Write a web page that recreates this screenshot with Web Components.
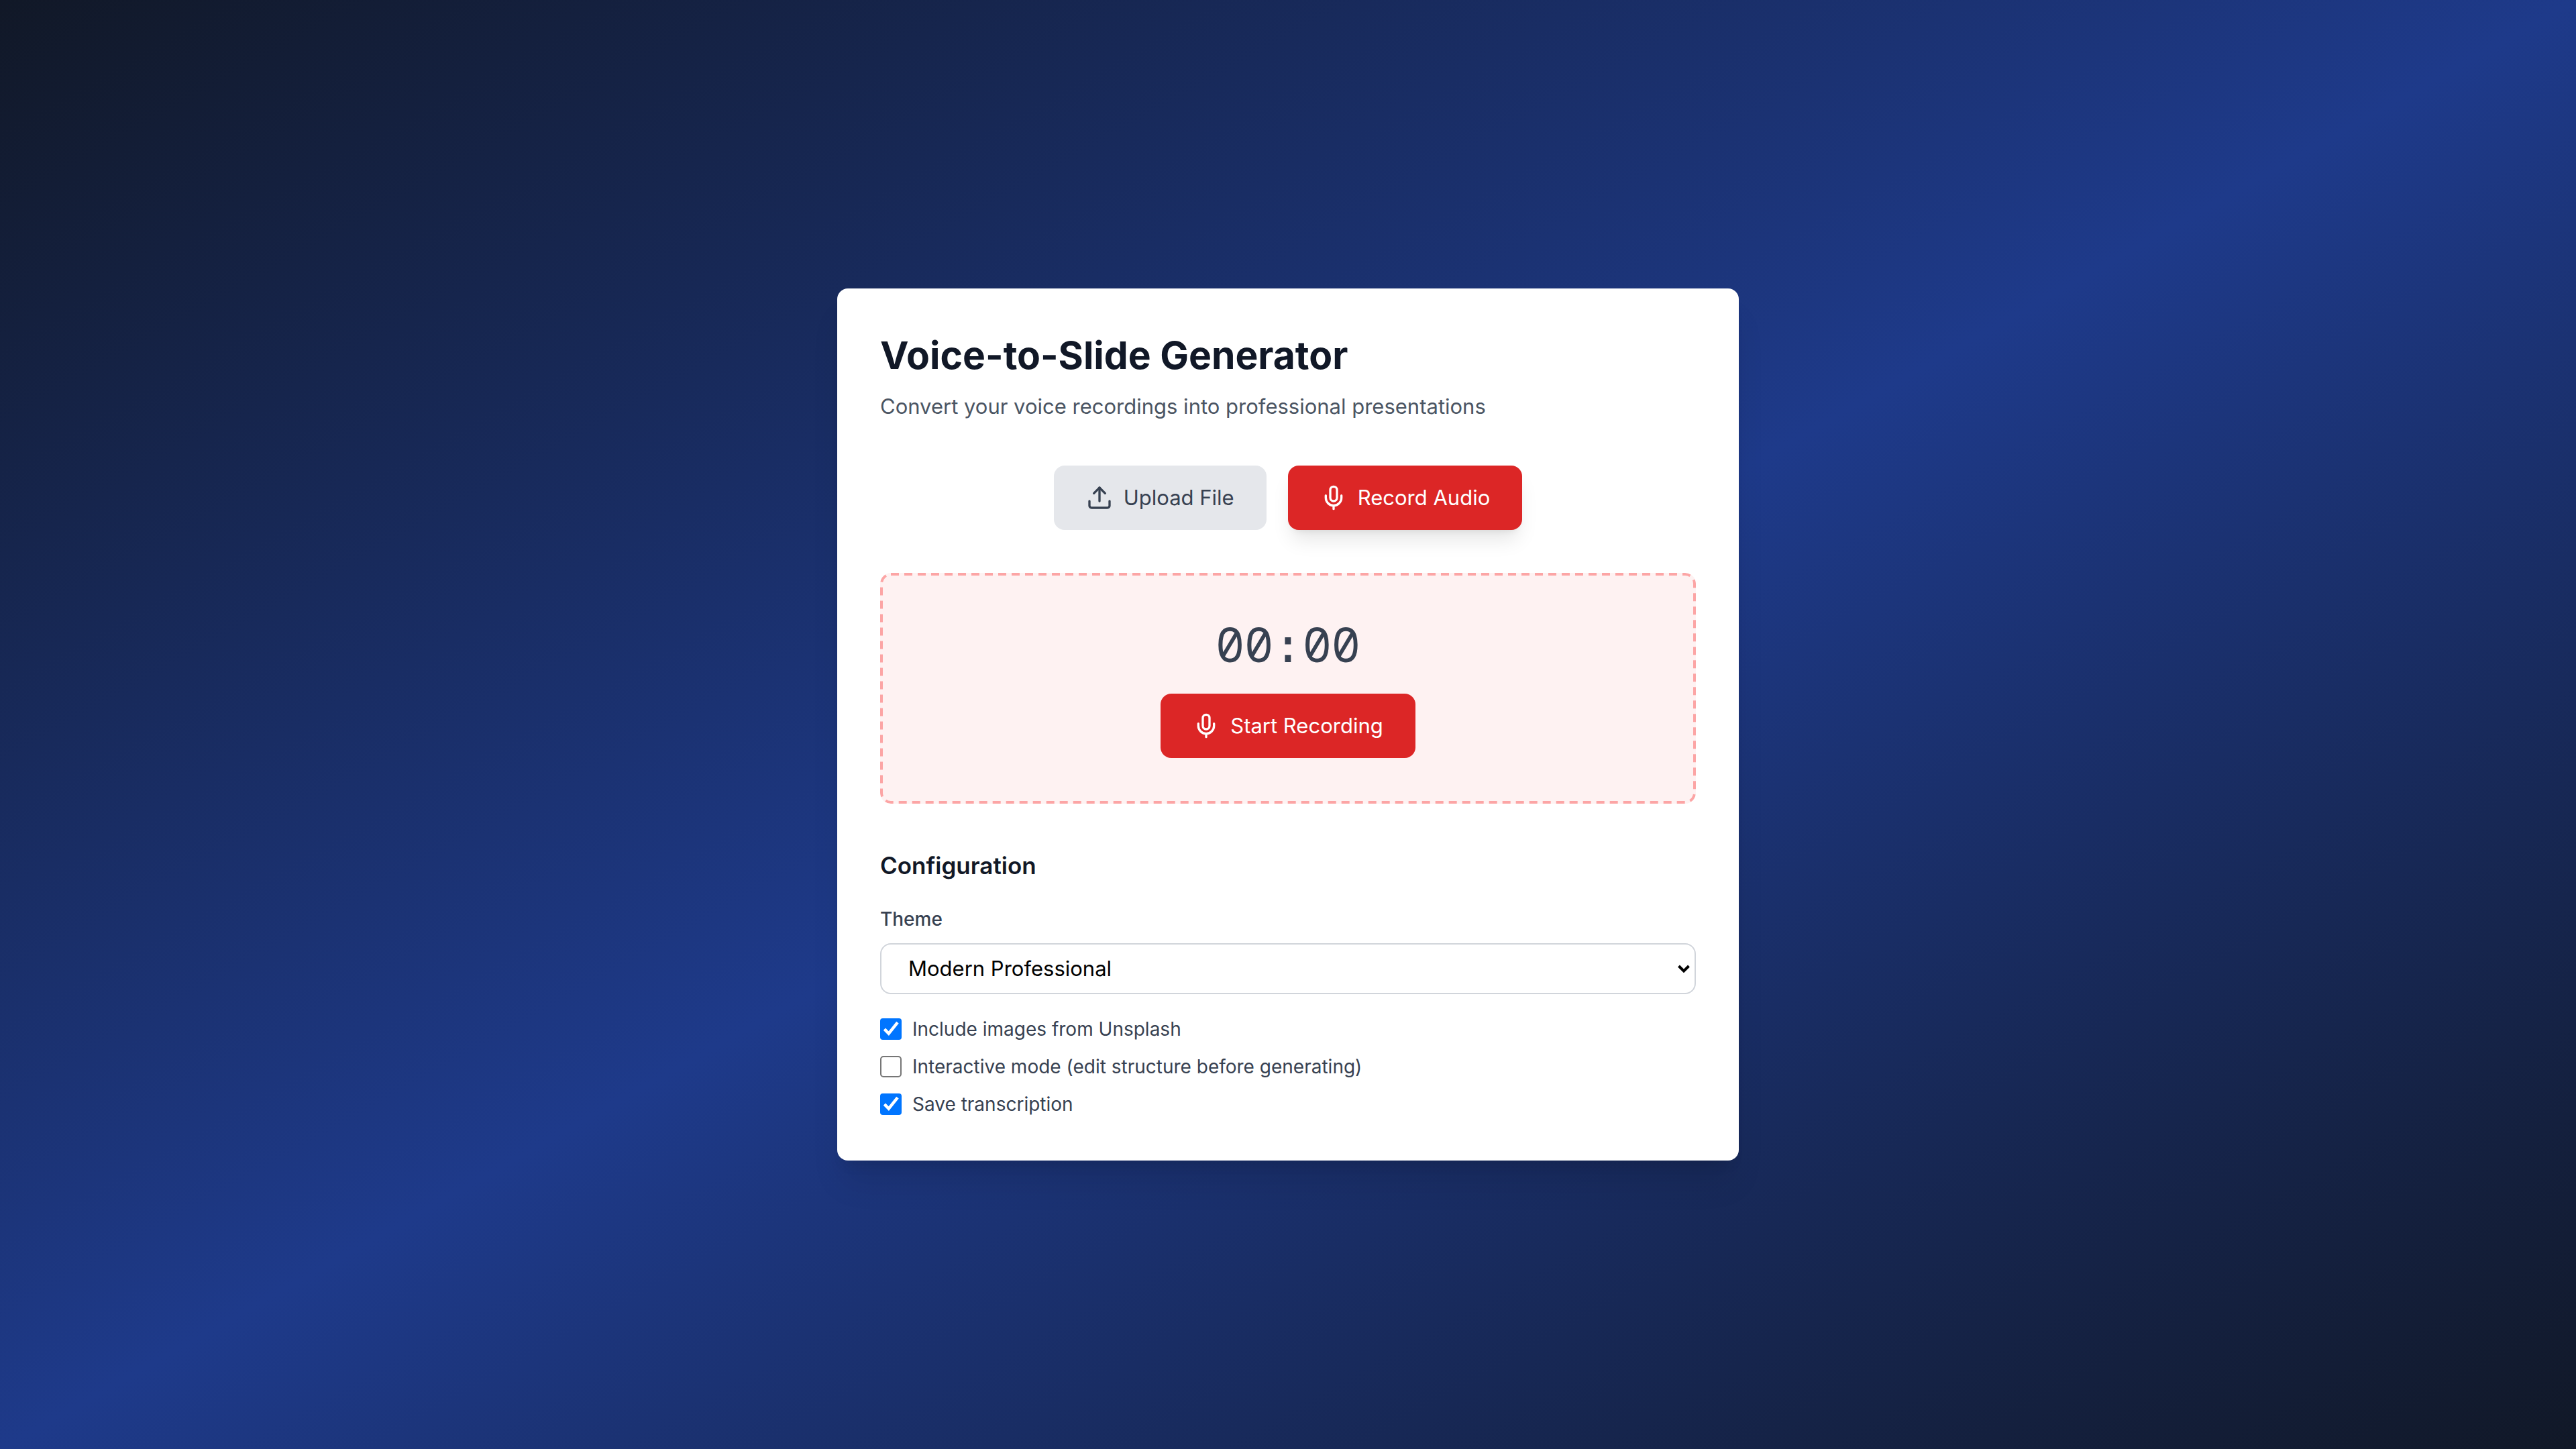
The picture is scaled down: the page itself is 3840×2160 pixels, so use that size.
<!DOCTYPE html>
<html lang="en">
<head>
<meta charset="utf-8">
<title>Voice-to-Slide Generator</title>
<style>
body { margin: 0; font-family: Inter, "Liberation Sans", sans-serif; font-size: 31px; line-height: 48px; }
</style>
</head>
<body>
<voice-app></voice-app>

<template id="app-tpl">
<style>
:host { display: flex; align-items: center; justify-content: center; min-height: 100vh; box-sizing: border-box; padding: 32px;
  background: linear-gradient(to bottom right, #111827, #1e3a8a, #111827); }
main { width: 100%; max-width: 1344px; box-sizing: border-box; padding: 64px; border-radius: 16px; background: #fff;
  box-shadow: 0 40px 50px -10px rgb(0 0 0 / .1), 0 16px 20px -12px rgb(0 0 0 / .1); }
h1 { margin: 0 0 16px; font-size: 57px; line-height: 72px; font-weight: 700; color: #111827; }
.lead { margin: 0 0 64px; color: #4b5563; }
.modes { display: flex; justify-content: center; gap: 32px; margin-bottom: 64px; }
recorder-panel { margin-bottom: 64px; }
h2 { margin: 0 0 32px; font-size: 35px; line-height: 56px; font-weight: 600; color: #111827; }
theme-select { margin-bottom: 32px; }
.options { display: flex; flex-direction: column; gap: 16px; }
</style>
<main>
  <h1>Voice-to-Slide Generator</h1>
  <p class="lead">Convert your voice recordings into professional presentations</p>
  <div class="modes">
    <icon-button icon="upload" variant="muted">Upload File</icon-button>
    <icon-button icon="mic" variant="raised">Record Audio</icon-button>
  </div>
  <recorder-panel></recorder-panel>
  <h2>Configuration</h2>
  <theme-select></theme-select>
  <div class="options">
    <check-option checked>Include images from Unsplash</check-option>
    <check-option>Interactive mode (edit structure before generating)</check-option>
    <check-option checked>Save transcription</check-option>
  </div>
</main>
</template>

<template id="button-tpl">
<style>
:host { display: block; }
button { display: flex; align-items: center; gap: 16px; padding: 24px 48px; border: 0; border-radius: 16px;
  background: #dc2626; color: #fff; font: inherit; cursor: pointer; }
:host([variant="muted"]) button { background: #e5e7eb; color: #374151; }
:host([variant="raised"]) button { box-shadow: 0 20px 30px -6px rgb(0 0 0 / .1), 0 8px 12px -8px rgb(0 0 0 / .1); }
svg { width: 40px; height: 40px; fill: none; stroke: currentColor; stroke-width: 2; stroke-linecap: round; stroke-linejoin: round; }
</style>
<button type="button"><svg viewBox="0 0 24 24" aria-hidden="true"></svg><span><slot></slot></span></button>
</template>

<template id="recorder-tpl">
<style>
:host { display: flex; flex-direction: column; align-items: center; gap: 32px; padding: 68px; border-radius: 16px;
  background: #fef2f2 url('data:image/svg+xml,<svg xmlns="http://www.w3.org/2000/svg"><rect x="2" y="2" rx="14" style="width:calc(100% - 4px);height:calc(100% - 4px)" fill="none" stroke="%23fca5a5" stroke-width="4" stroke-dasharray="12 8"/></svg>') 0 0 / 100% 100% no-repeat; }
.time { font: 72px/80px "DejaVu Sans Mono", monospace; color: #374151; }
.digits { font-family: "Noto Sans Mono", "DejaVu Sans Mono", monospace; line-height: 72px; }
</style>
<div class="time" role="timer"><span class="digits">00</span>:<span class="digits">00</span></div>
<icon-button icon="mic">Start Recording</icon-button>
</template>

<template id="select-tpl">
<style>
:host { display: block; }
label { display: block; margin-bottom: 16px; font-size: 28px; line-height: 40px; font-weight: 500; color: #374151; }
select { display: block; width: 100%; height: 76px; box-sizing: border-box; padding: 0 40px; border: 2px solid #d1d5db; border-radius: 16px;
  appearance: none; color: #000; font: inherit;
  background: #fff url('data:image/svg+xml,<svg xmlns="http://www.w3.org/2000/svg" viewBox="0 0 18 12"><path d="M1.500 2L9 9.500 16.500 2" fill="none" stroke="black" stroke-width="4"/></svg>') no-repeat right 7px center / 18px 12px; }
</style>
<label for="theme">Theme</label>
<select id="theme">
  <option>Modern Professional</option>
  <option>Minimal</option>
  <option>Creative</option>
</select>
</template>

<template id="check-tpl">
<style>
:host { display: block; }
label { display: flex; align-items: center; gap: 16px; font-size: 28px; line-height: 40px; color: #374151; }
input { appearance: none; flex: none; width: 32px; height: 32px; margin: 0; box-sizing: border-box; border: 2px solid #767676; border-radius: 5px; background: #fff; }
input:checked { border: 0; border-radius: 4px; background: #0075ff url('data:image/svg+xml,<svg xmlns="http://www.w3.org/2000/svg" viewBox="0 0 32 32"><path d="M6.400 16.200l6.400 6.500L26 6.200" fill="none" stroke="white" stroke-width="4.500"/></svg>') center / 32px 32px; }
</style>
<label><input type="checkbox"><span><slot></slot></span></label>
</template>

<script>
const ICONS = {
  upload: '<path d="M21 15v4a2 2 0 0 1-2 2H5a2 2 0 0 1-2-2v-4"/><path d="M17 8l-5-5-5 5"/><path d="M12 3v12"/>',
  mic: '<path d="M12 2a3 3 0 0 0-3 3v7a3 3 0 0 0 6 0V5a3 3 0 0 0-3-3Z"/><path d="M19 10v2a7 7 0 0 1-14 0v-2"/><path d="M12 19v3"/>'
};
class TemplateElement extends HTMLElement {
  constructor() {
    super();
    this.attachShadow({ mode: 'open' });
    this.shadowRoot.append(document.getElementById(this.constructor.template).content.cloneNode(true));
  }
}
customElements.define('icon-button', class extends TemplateElement {
  static template = 'button-tpl';
  connectedCallback() { this.shadowRoot.querySelector('svg').innerHTML = ICONS[this.getAttribute('icon')]; }
});
customElements.define('theme-select', class extends TemplateElement { static template = 'select-tpl'; });
customElements.define('check-option', class extends TemplateElement {
  static template = 'check-tpl';
  connectedCallback() { this.shadowRoot.querySelector('input').checked = this.hasAttribute('checked'); }
});
customElements.define('recorder-panel', class extends TemplateElement { static template = 'recorder-tpl'; });
customElements.define('voice-app', class extends TemplateElement { static template = 'app-tpl'; });
</script>
</body>
</html>
